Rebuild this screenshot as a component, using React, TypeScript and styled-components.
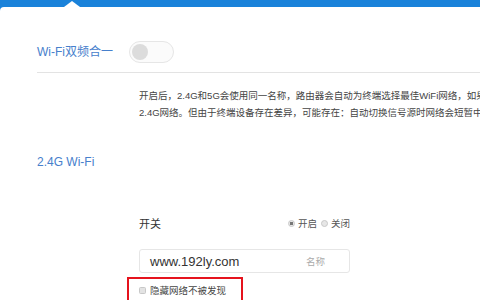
import React from "react";
import styled, { createGlobalStyle } from "styled-components";

const Global = createGlobalStyle`
  html, body { margin: 0; padding: 0; background: #ffffff; overflow: hidden; }
  body { font-family: "Liberation Sans", "Noto Sans CJK SC", sans-serif; }
`;

const Page = styled.div`
  width: 480px;
  height: 300px;
  overflow: hidden;
  background: #1a82da;
  display: flex;
  flex-direction: column;
`;

const TopBar = styled.div`
  position: relative;
  height: 7px;
  flex: none;
`;

const Notch = styled.div`
  position: absolute;
  left: 64px;
  bottom: 0;
  width: 0;
  height: 0;
  border-left: 8px solid transparent;
  border-right: 8px solid transparent;
  border-bottom: 6px solid #ffffff;
`;

const Panel = styled.div`
  flex: 1;
  background: #ffffff;
  border-top-left-radius: 4px;
  display: flex;
  flex-direction: column;
`;

const DualSection = styled.div`
  margin-left: 37px;
  padding: 34px 0 9px;
  border-bottom: 1px solid #e3e3e3;
  display: flex;
  align-items: center;
`;

const BlueLabel = styled.div<{ $width?: number }>`
  width: ${(p) => (p.$width ? `${p.$width}px` : "auto")};
  color: #4780cc;
  font-size: 12px;
  line-height: 18px;
  white-space: nowrap;
`;

const Toggle = styled.div`
  width: 45px;
  height: 22px;
  box-sizing: border-box;
  border: 1px solid #e6e6e6;
  border-radius: 11px;
  background: #fbfbfb;
  display: flex;
  align-items: center;
  padding-left: 2px;
`;

const Knob = styled.div`
  width: 16px;
  height: 16px;
  border-radius: 50%;
  background: #dcdcdc;
`;

const Desc = styled.div`
  margin: 14px 0 0 139px;
  color: #444;
  font-size: 9.5px;
  line-height: 17px;
`;

const DescLine = styled.div`
  white-space: nowrap;
`;

const Title = styled(BlueLabel)`
  margin: 32px 0 0 37px;
`;

const Form = styled.div`
  margin: 44px 0 0 139px;
  width: 211px;
  display: flex;
  flex-direction: column;
`;

const SwitchRow = styled.div`
  display: flex;
  justify-content: space-between;
  align-items: center;
  height: 16px;
`;

const FieldLabel = styled.span`
  color: #333;
  font-size: 11px;
`;

const RadioGroup = styled.div`
  display: flex;
  align-items: center;
  font-size: 9.5px;
  color: #555;
`;

const RadioOption = styled.label`
  display: flex;
  align-items: center;
  gap: 3px;
  margin-left: 4px;
`;

const RadioDot = styled.span<{ $checked?: boolean }>`
  width: 7px;
  height: 7px;
  box-sizing: border-box;
  border-radius: 50%;
  border: 1px solid #c8c8c8;
  background: ${(p) => (p.$checked ? "radial-gradient(circle, #777 0 1.6px, #e6e6e6 2px)" : "#e6e6e6")};
`;

const InputBox = styled.div`
  margin-top: 18px;
  height: 24px;
  box-sizing: border-box;
  border: 1px solid #e6e6e6;
  border-radius: 3px;
  display: flex;
  align-items: center;
  justify-content: space-between;
  padding: 0 24px 0 10px;
`;

const InputValue = styled.span`
  font-size: 13px;
  color: #333;
`;

const Placeholder = styled.span`
  font-size: 9.5px;
  color: #aaa;
`;

const Highlight = styled.div`
  margin: 4px 0 0 -12px;
  width: 116px;
  height: 40px;
  box-sizing: border-box;
  border: 2px solid #e5131d;
  padding: 4px 0 0 10px;
`;

const CheckRow = styled.div`
  display: flex;
  align-items: center;
  gap: 4px;
  height: 14px;
  font-size: 9.5px;
  color: #444;
`;

const CheckBox = styled.span`
  width: 7px;
  height: 7px;
  box-sizing: border-box;
  border: 1px solid #c8c8c8;
  border-radius: 1.5px;
  background: #e3e3e3;
`;

export default function App() {
  return (
    <>
      <Global />
      <Page>
        <TopBar>
          <Notch />
        </TopBar>
        <Panel>
          <DualSection>
            <BlueLabel $width={92}>Wi-Fi双频合一</BlueLabel>
            <Toggle>
              <Knob />
            </Toggle>
          </DualSection>
          <Desc>
            <DescLine>开启后，2.4G和5G会使用同一名称，路由器会自动为终端选择最佳WiFi网络，如果终端同时支持5G和</DescLine>
            <DescLine>2.4G网络。但由于终端设备存在差异，可能存在：自动切换信号源时网络会短暂中断的情况。</DescLine>
          </Desc>
          <Title>2.4G Wi-Fi</Title>
          <Form>
            <SwitchRow>
              <FieldLabel>开关</FieldLabel>
              <RadioGroup>
                <RadioOption>
                  <RadioDot $checked />
                  开启
                </RadioOption>
                <RadioOption>
                  <RadioDot />
                  关闭
                </RadioOption>
              </RadioGroup>
            </SwitchRow>
            <InputBox>
              <InputValue>www.192ly.com</InputValue>
              <Placeholder>名称</Placeholder>
            </InputBox>
            <Highlight>
              <CheckRow>
                <CheckBox />
                隐藏网络不被发现
              </CheckRow>
            </Highlight>
          </Form>
        </Panel>
      </Page>
    </>
  );
}
